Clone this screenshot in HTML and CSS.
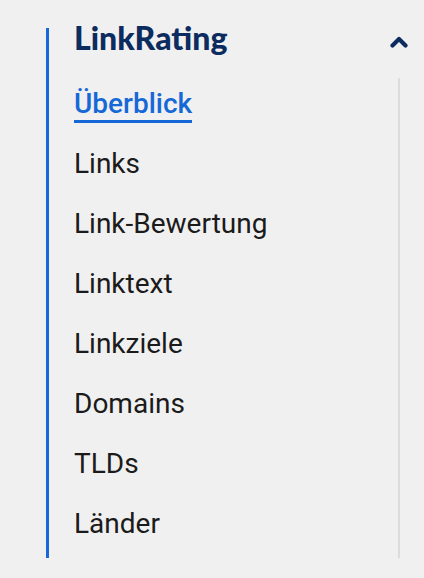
FILE: index.html
```html
<!DOCTYPE html>
<html lang="de">
<head>
<meta charset="utf-8">
<title>LinkRating</title>
<link rel="stylesheet" href="styles.css">
</head>
<body>
<nav class="nav">
  <div class="nav-head">
    <span class="nav-title">LinkRating</span>
    <svg class="chevron" width="18" height="12" viewBox="0 0 18 12" aria-hidden="true">
      <polyline points="2.5,9.5 9,3 15.5,9.5" fill="none" stroke="#0c2b5e" stroke-width="4.2" stroke-linecap="round" stroke-linejoin="round"/>
    </svg>
  </div>
  <ul class="nav-list">
    <li class="nav-item"><a class="nav-link active">Überblick</a></li>
    <li class="nav-item"><a class="nav-link">Links</a></li>
    <li class="nav-item"><a class="nav-link">Link-Bewertung</a></li>
    <li class="nav-item"><a class="nav-link">Linktext</a></li>
    <li class="nav-item"><a class="nav-link">Linkziele</a></li>
    <li class="nav-item"><a class="nav-link">Domains</a></li>
    <li class="nav-item"><a class="nav-link">TLDs</a></li>
    <li class="nav-item"><a class="nav-link">Länder</a></li>
  </ul>
</nav>
</body>
</html>
```
FILE: styles.css
```css
html, body {
  margin: 0;
  padding: 0;
  background: #f0f0f0;
}
body {
  padding: 28px 0 0 46px;
}
.nav {
  width: 361px;
  border-left: 3px solid #1668d6;
}
.nav-head {
  display: flex;
  justify-content: space-between;
  align-items: flex-start;
  height: 50px;
  padding: 0 2px 0 25px;
}
.nav-title {
  font-family: Lato, "Noto Sans", sans-serif;
  font-weight: 900;
  font-size: 32px;
  line-height: 19px;
  color: #0c2b5e;
}
.chevron {
  margin-top: 8px;
  display: block;
}
.nav-list {
  list-style: none;
  margin: 0 10px 0 0;
  padding: 0 0 0 25px;
  border-right: 2px solid #dcdcdc;
}
.nav-item {
  height: 60px;
  box-sizing: border-box;
  padding-bottom: 8px;
  line-height: 52px;
  font-family: Roboto, "Liberation Sans", sans-serif;
  font-size: 28px;
  color: #1b1b1b;
}
.nav-link {
  color: inherit;
  text-decoration: none;
}
.nav-link.active {
  color: #1668d6;
  font-weight: 500;
  border-bottom: 3px solid #1668d6;
}
```
